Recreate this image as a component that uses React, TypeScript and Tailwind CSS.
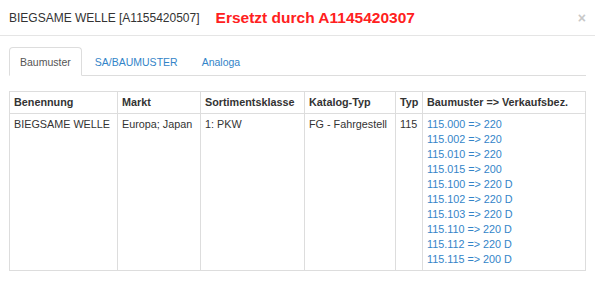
const rows = [
  "115.000 => 220",
  "115.002 => 220",
  "115.010 => 220",
  "115.015 => 200",
  "115.100 => 220 D",
  "115.102 => 220 D",
  "115.103 => 220 D",
  "115.110 => 220 D",
  "115.112 => 220 D",
  "115.115 => 200 D",
];

const tabs = ["Baumuster", "SA/BAUMUSTER", "Analoga"];

export default function App() {
  return (
    <div className="w-[595px] h-[289px] bg-white text-[#333] font-['Liberation_Sans',Arial,sans-serif]">
      {/* Header */}
      <div className="h-[36px] flex items-center pl-[9px] pr-[8px] border-b border-[#e5e5e5]">
        <h4 className="text-[12px] leading-none">BIEGSAME WELLE [A1155420507]</h4>
        <span className="ml-[16px] text-[15.5px] font-bold text-[#ff2020] leading-none">
          Ersetzt durch A1145420307
        </span>
        <button className="ml-auto mr-[1px] text-[14px] font-bold leading-none text-[#c8c8c8]">×</button>
      </div>

      <div className="px-[9px] pt-[11px]">
        {/* Tabs */}
        <ul className="flex border-b border-[#ddd] text-[10.5px]">
          {tabs.map((t, i) => (
            <li key={t} className="mr-[2px] -mb-px">
              <a
                className={
                  i === 0
                    ? "block h-[29px] leading-[28px] px-[10px] rounded-t-[4px] border border-[#ddd] border-b-white bg-white text-[#555]"
                    : "block h-[29px] leading-[28px] px-[10px] border border-transparent text-[#3384c8]"
                }
              >
                {t}
              </a>
            </li>
          ))}
        </ul>

        {/* Table */}
        <table className="mt-[15px] w-[577px] table-fixed border-collapse text-[10.8px] leading-[15px]">
          <thead>
            <tr className="font-bold text-left">
              <th className="w-[108px] border border-[#ddd] px-[4px] py-[3px]">Benennung</th>
              <th className="w-[83px] border border-[#ddd] px-[4px] py-[3px]">Markt</th>
              <th className="w-[104px] border border-[#ddd] px-[4px] py-[3px]">Sortimentsklasse</th>
              <th className="w-[91px] border border-[#ddd] px-[4px] py-[3px]">Katalog-Typ</th>
              <th className="w-[27px] border border-[#ddd] px-[4px] py-[3px]">Typ</th>
              <th className="border border-[#ddd] px-[4px] py-[3px]">Baumuster =&gt; Verkaufsbez.</th>
            </tr>
          </thead>
          <tbody>
            <tr className="align-top">
              <td className="border border-[#ddd] px-[4px] py-[3px]">BIEGSAME WELLE</td>
              <td className="border border-[#ddd] px-[4px] py-[3px]">Europa; Japan</td>
              <td className="border border-[#ddd] px-[4px] py-[3px]">1: PKW</td>
              <td className="border border-[#ddd] px-[4px] py-[3px]">FG - Fahrgestell</td>
              <td className="border border-[#ddd] px-[4px] py-[3px]">115</td>
              <td className="border border-[#ddd] px-[4px] py-[3px]">
                {rows.map((r) => (
                  <a key={r} className="block text-[#3384c8]">
                    {r}
                  </a>
                ))}
              </td>
            </tr>
          </tbody>
        </table>
      </div>
    </div>
  );
}
